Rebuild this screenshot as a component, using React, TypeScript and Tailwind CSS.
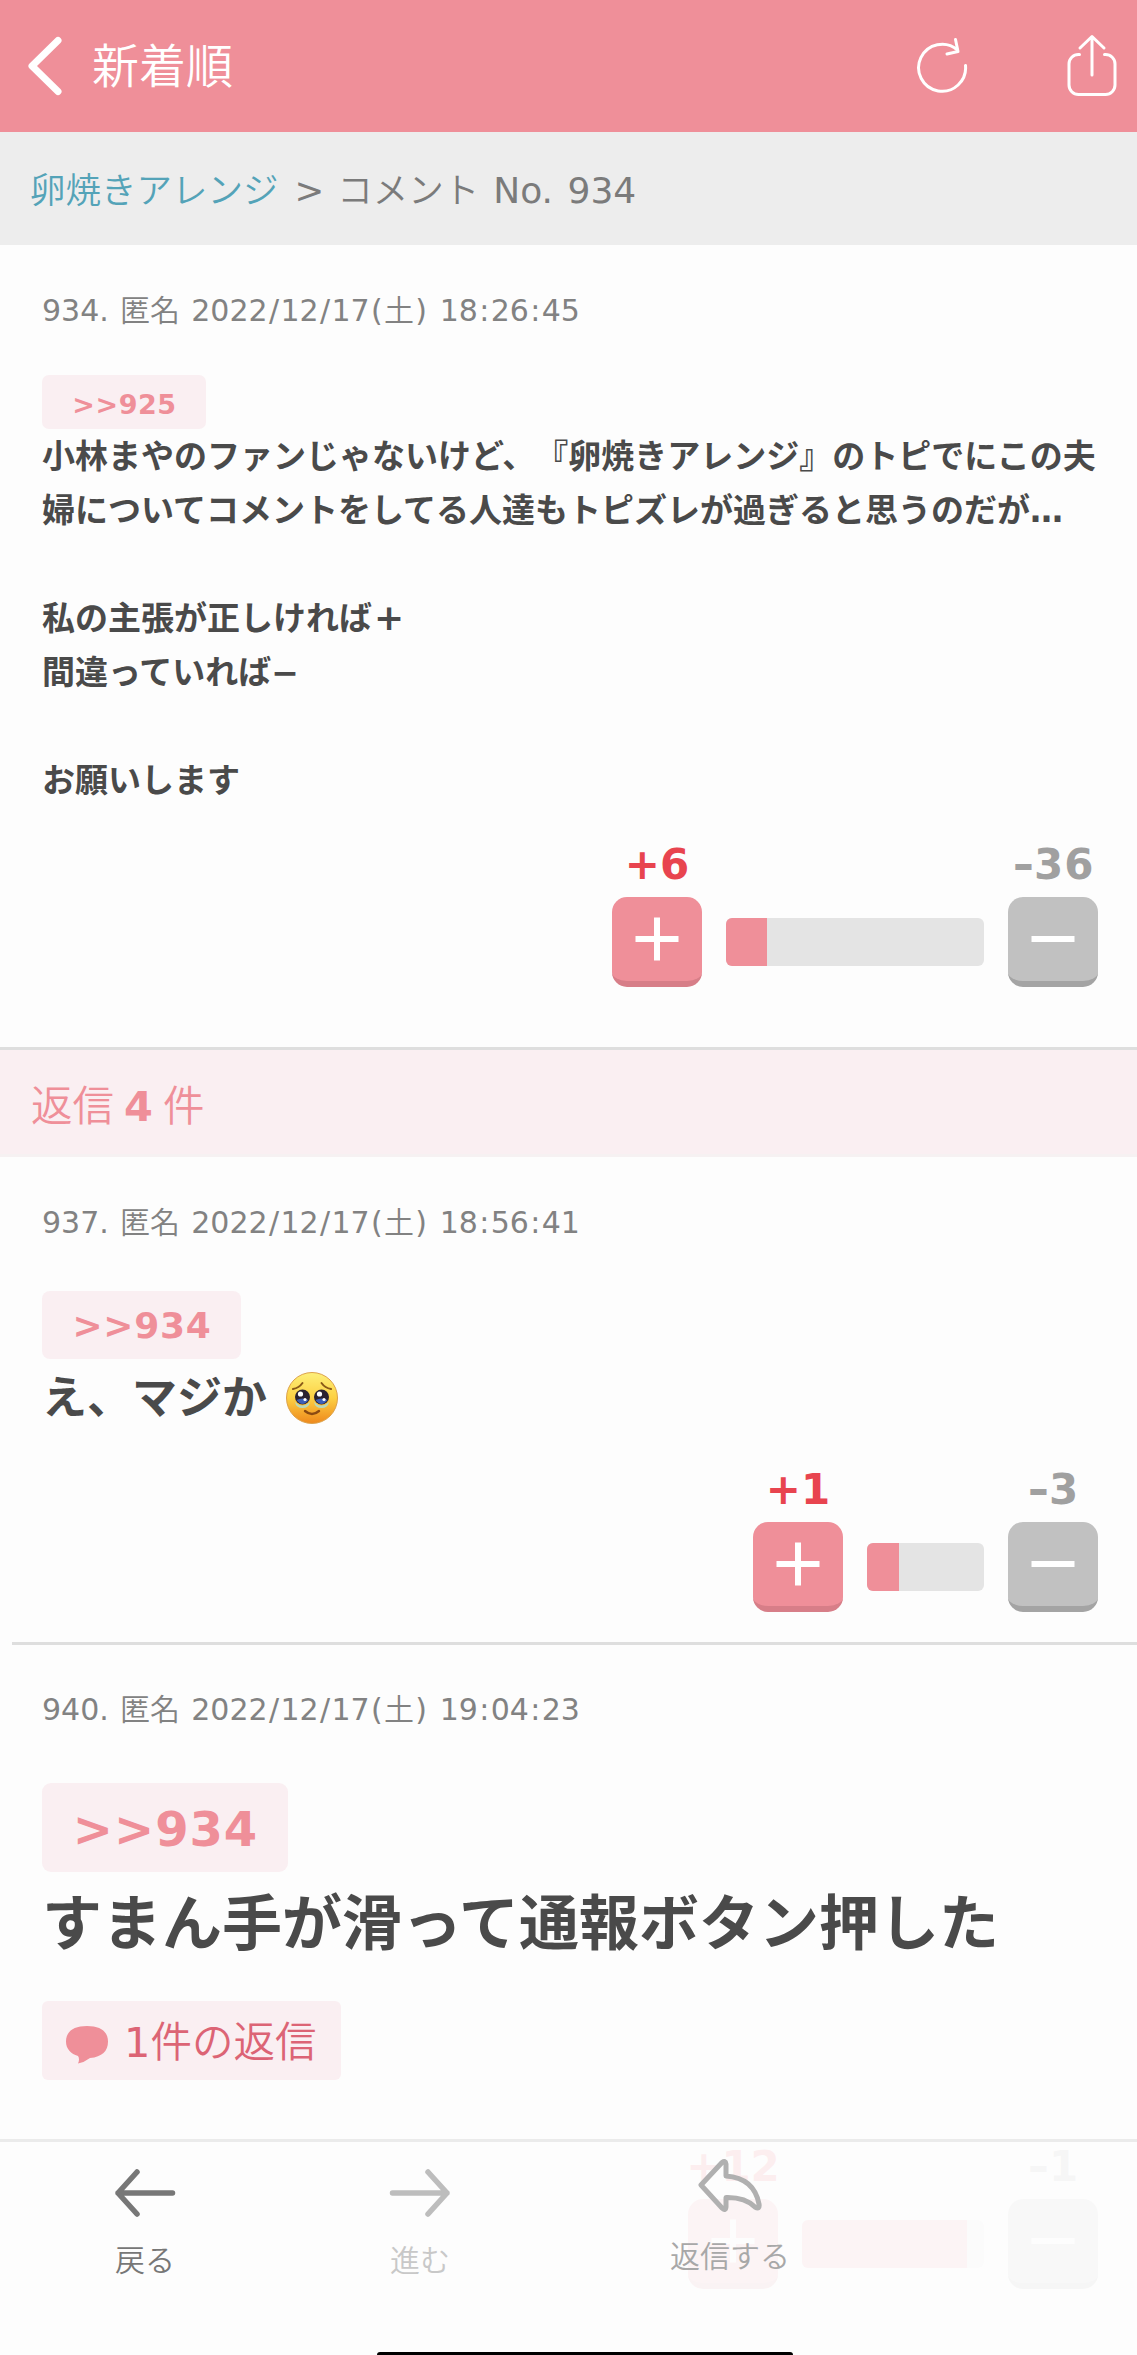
import React from 'react';

interface Comment {
  no: number;
  date: string;
  time: string;
  anchor: string;
  plus: number;
  minus: number;
}

const comments: Record<string, Comment> = {
  main: { no: 934, date: '2022/12/17', time: '18:26:45', anchor: '>>925', plus: 6, minus: 36 },
  first: { no: 937, date: '2022/12/17', time: '18:56:41', anchor: '>>934', plus: 1, minus: 3 },
  second: { no: 940, date: '2022/12/17', time: '19:04:23', anchor: '>>934', plus: 12, minus: 1 },
};

// Latin runs keep the regular weight, punctuation gets a little more air
const Spaced: React.FC<{ text: string }> = ({ text }) => (
  <>
    {text.split(/([/:()]|[ -~]+?(?=[/:()]|[^ -~]|$))/).map((part, i) => {
      if (/^[/:()]$/.test(part)) {
        return <span key={i} className="px-[0.045em] font-normal">{part}</span>;
      }
      return /^[ -~]+$/.test(part) ? <span key={i} className="font-normal">{part}</span> : part;
    })}
  </>
);

const Meta: React.FC<{ comment: Comment }> = ({ comment }) => (
  <p className="text-[30px] leading-[46px] font-[350] text-[#828282] whitespace-nowrap [word-spacing:1.7px]">
    <Spaced text={`${comment.no}. 匿名 ${comment.date}(土) ${comment.time}`} />
  </p>
);

const PlusIcon: React.FC = () => (
  <svg width="44" height="44" viewBox="0 0 44 44" stroke="#fff" strokeWidth="6" fill="none">
    <path d="M22 0.5v43M0.5 22h43" />
  </svg>
);

const MinusIcon: React.FC = () => (
  <svg width="44" height="44" viewBox="0 0 44 44" stroke="#fff" strokeWidth="6" fill="none">
    <path d="M0.5 22h43" />
  </svg>
);

const Votes: React.FC<{ comment: Comment; barClass: string; fill: number }> = ({ comment, barClass, fill }) => (
  <div className="flex items-end justify-end gap-6">
    <div className="flex w-[90px] flex-col items-center">
      <span className="text-[42px] leading-[44px] font-bold text-[#e8444f]">+{comment.plus}</span>
      <button className="mt-[10px] flex h-[90px] w-[90px] items-center justify-center rounded-[15px] border-b-[6px] border-[#d77e88] bg-[#ef8f99]">
        <PlusIcon />
      </button>
    </div>
    <div className={`mb-[21px] h-12 overflow-hidden rounded-[6px] bg-[#e4e4e4] ${barClass}`}>
      <div className="h-full bg-[#ef8f99]" style={{ width: `${fill}px` }} />
    </div>
    <div className="flex w-[90px] flex-col items-center">
      <span className="pl-[3px] text-[42px] leading-[44px] font-bold tracking-[0.02em] text-[#a0a0a0]">
        <span className="inline-block scale-x-125 pr-px">-</span>
        {comment.minus}
      </span>
      <button className="mt-[10px] flex h-[90px] w-[90px] items-center justify-center rounded-[15px] border-b-[6px] border-[#a4a4a4] bg-[#c1c1c1]">
        <MinusIcon />
      </button>
    </div>
  </div>
);

const TearyFace: React.FC = () => (
  <svg className="inline-block" width="54" height="54" viewBox="0 0 54 54">
    <defs>
      <linearGradient id="face" x1="0" y1="0" x2="0" y2="1">
        <stop offset="0" stopColor="#fdf07a" />
        <stop offset="0.5" stopColor="#fdd043" />
        <stop offset="1" stopColor="#ee881c" />
      </linearGradient>
    </defs>
    <circle cx="27" cy="27" r="25.5" fill="url(#face)" stroke="#dda24a" strokeWidth="1" />
    <path d="M8 18q6-1 9.500-6M46 18q-6-1-9.500-6" stroke="#8a5a18" strokeWidth="2" fill="none" strokeLinecap="round" />
    <circle cx="17.500" cy="26" r="7.500" fill="#2b2230" />
    <circle cx="36.500" cy="26" r="7.500" fill="#2b2230" />
    <path d="M11.500 29q6 8 12 0q-6-3-12 0M30.500 29q6 8 12 0q-6-3-12 0" fill="#3c5fb8" />
    <circle cx="15.500" cy="23" r="2.600" fill="#fff" />
    <circle cx="34.500" cy="23" r="2.600" fill="#fff" />
    <circle cx="20" cy="28.500" r="1.600" fill="#fff" />
    <circle cx="39" cy="28.500" r="1.600" fill="#fff" />
    <path d="M10 31q7 7 15 0q-1 6-7.500 6t-7.500-6M29 31q7 7 15 0q-1 6-7.500 6t-7.500-6" fill="#b9d9b8" />
    <path d="M20 40q7 6 14 0" stroke="#8a4a12" strokeWidth="2.400" fill="none" strokeLinecap="round" />
  </svg>
);

const Header: React.FC = () => (
  <header className="flex h-[132px] items-center bg-[#ef8f99] pr-[20px] pl-[27px] text-white">
    <svg width="36" height="60" viewBox="0 0 36 60" fill="none" stroke="#fff" strokeWidth="7" strokeLinecap="round" strokeLinejoin="round">
      <path d="M31 4.500L5 30l26 25.500" />
    </svg>
    <h1 className="ml-[29px] pt-[2px] text-[47px] leading-[60px] font-[350]">新着順</h1>
    <div className="ml-auto flex items-center gap-[99px]">
      <svg width="52" height="64" viewBox="0 0 52 64" fill="none" stroke="#fff" strokeWidth="3" strokeLinecap="round" strokeLinejoin="round">
        <path d="M49.500 31.500A23.500 23.500 0 1 1 41.500 16" />
        <path d="M39.500 5.500l2.500 12-11 2.500" />
      </svg>
      <svg width="50" height="64" viewBox="0 0 50 64" fill="none" stroke="#fff" strokeWidth="3" strokeLinecap="round" strokeLinejoin="round">
        <path d="M12.500 20.500h-1a9.500 9.500 0 0 0-9.500 9.500v21a9.500 9.500 0 0 0 9.500 9.500h27a9.500 9.500 0 0 0 9.500-9.500V30a9.500 9.500 0 0 0-9.500-9.500h-1" />
        <path d="M25 41V3M13 14L25 2.500 37 14" />
      </svg>
    </div>
  </header>
);

const Toolbar: React.FC = () => (
  <nav className="absolute inset-x-0 bottom-0 h-[216px] border-t-[3px] border-[#ebebeb] bg-[#fdfdfd]/92 text-[30px] leading-[36px] font-[350]">
    <div className="flex pl-[100px] pt-[22px]">
      <button className="flex w-[90px] flex-col items-center text-[#777]">
        <svg className="mt-1" width="62" height="50" viewBox="0 0 62 50" fill="none" stroke="#777" strokeWidth="5.500" strokeLinecap="round" strokeLinejoin="round">
          <path d="M58.500 25H4M23 4L4 25l19 21" />
        </svg>
        <span className="mt-[25px]">戻る</span>
      </button>
      <button className="ml-[185px] flex w-[90px] flex-col items-center text-[#c8c8c8]">
        <svg className="mt-1" width="62" height="50" viewBox="0 0 62 50" fill="none" stroke="#bdbdbd" strokeWidth="5.500" strokeLinecap="round" strokeLinejoin="round">
          <path d="M3.500 25H58M39 4l19 21-19 21" />
        </svg>
        <span className="mt-[25px]">進む</span>
      </button>
      <button className="-mt-[6px] ml-[200px] flex w-[130px] flex-col items-center text-[#a8a8a8]">
        <svg width="66" height="54" viewBox="0 0 66 54" fill="none" stroke="#b0b0b0" strokeWidth="5" strokeLinecap="round" strokeLinejoin="round">
          <path d="M4 27L25 4.500Q28.500 2 29 6V18Q57 20 62 46Q63 52 58 49Q48 39 29 39.500V49Q28.500 53.500 25 50Z" />
        </svg>
        <span className="mt-[27px]">返信する</span>
      </button>
    </div>
    <div className="absolute bottom-0 left-[377px] h-[3px] w-[416px] rounded-t-[4px] bg-black" />
  </nav>
);

const App: React.FC = () => {
  return (
    <div
      lang="ja"
      className="relative h-[2355px] w-[1137px] overflow-hidden bg-[#fdfdfd] font-['DejaVu_Sans','Noto_Sans_CJK_JP',sans-serif] [text-spacing-trim:space-all]"
    >
      <Header />

      <div className="flex h-[113px] items-center bg-[#ededed] pt-[5px] pl-[30px] text-[35.5px] leading-[48px] font-[350] whitespace-nowrap text-[#7b7b7b]">
        <a className="text-[#54a3b8]">卵焼きアレンジ</a>
        <span className="ml-[16px] font-normal">&gt;</span>
        <span className="ml-[13px]">コメント</span>
        <span className="ml-[14px] text-[36px] font-normal [word-spacing:3px]">No. 934</span>
      </div>

      <article className="pt-[43px] pr-[39px] pb-[60px] pl-[42px]">
        <Meta comment={comments.main} />
        <div className="mt-[41px] flex h-[54px] w-[164px] items-center justify-center rounded-[7px] bg-[#faeff2] pt-[6px] pl-px text-[27px] font-bold tracking-[0.02em] text-[#ef8f99]">
          {comments.main.anchor}
        </div>
        <div className="mt-px text-[33px] leading-[54px] font-bold whitespace-nowrap text-[#4a4a4a]">
          <p>小林まやのファンじゃないけど、『卵焼きアレンジ』のトピでにこの夫</p>
          <p>婦についてコメントをしてる人達もトピズレが過ぎると思うのだが…</p>
          <br />
          <p>私の主張が正しければ<span className="ml-[2px] text-[36px] leading-none">+</span></p>
          <p>間違っていれば−</p>
          <br />
          <p>お願いします</p>
        </div>
        <div className="mt-[35px]">
          <Votes comment={comments.main} barClass="w-[258px]" fill={41} />
        </div>
      </article>

      <div className="flex h-[110px] items-center border-t-[3px] border-b-[3px] border-t-[#dedede] border-b-[#f6f1f2] bg-[#faeff2] pt-[10px] pl-[31px] text-[41.5px] font-[350] text-[#ef8f99]">
        <span>返信</span>
        <b className="mx-[10px] font-bold">4</b>
        <span>件</span>
      </div>

      <article className="pt-[43px] pr-[39px] pb-[30px] pl-[42px]">
        <Meta comment={comments.first} />
        <div className="mt-[45px] flex h-[68px] w-[199px] items-center justify-center rounded-[8px] bg-[#faeff2] pt-[2px] pl-px text-[36px] font-bold tracking-[0.02em] text-[#ef8f99]">
          {comments.first.anchor}
        </div>
        <p className="mt-[4px] flex h-[72px] items-center text-[45px] leading-[72px] font-bold text-[#4a4a4a]">
          え、マジか
          <span className="ml-[18px] flex pb-[2px]"><TearyFace /></span>
        </p>
        <div className="mt-[33px]">
          <Votes comment={comments.first} barClass="w-[117px]" fill={32} />
        </div>
      </article>

      <hr className="ml-3 border-t-[3px] border-[#dedede]" />

      <article className="pt-[42px] pr-[39px] pl-[42px]">
        <Meta comment={comments.second} />
        <div className="mt-[50px] flex h-[89px] w-[246px] items-center justify-center rounded-[9px] bg-[#faeff2] pt-[2px] pl-px text-[48px] font-bold tracking-[0.02em] text-[#ef8f99]">
          {comments.second.anchor}
        </div>
        <p className="mt-[4px] text-[60px] leading-[96px] font-bold whitespace-nowrap text-[#4a4a4a]">
          すまん手が滑って通報ボタン押した
        </p>
        <div className="mt-[29px] flex h-[79px] w-[299px] items-center rounded-[6px] bg-[#faeff2] pl-[24px] text-[41.5px] font-[350] text-[#dc6475]">
          <svg className="mt-[9px]" width="42" height="38" viewBox="0 0 42 38" fill="#ef8f99">
            <path d="M21 0C7 0 0 6 0 15.500c0 7.500 5 12.500 12 14.500q2 3 0 7.500q6-1 12-5.500C36 31 42 25 42 15.500C42 6 35 0 21 0z" />
          </svg>
          <span className="ml-[16px] pt-[5px] whitespace-nowrap"><Spaced text="1件の返信" /></span>
        </div>
        <div className="mt-[65px]">
          <Votes comment={comments.second} barClass="w-[182px]" fill={165} />
        </div>
      </article>

      <Toolbar />
    </div>
  );
};

export default App;
